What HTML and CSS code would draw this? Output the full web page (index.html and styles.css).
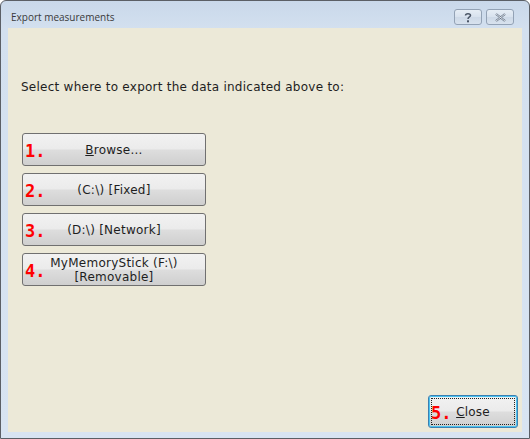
FILE: index.html
```html
<!DOCTYPE html>
<html>
<head>
<meta charset="utf-8">
<link rel="stylesheet" href="styles.css">
</head>
<body>
<div class="window">
  <div class="titlebar">
    <span class="title">Export measurements</span>
    <div class="caption-btns">
      <div class="cap-btn">
        <svg width="10" height="11" viewBox="0 0 10 11"><path d="M2.5 3.5 C2.5 1 7.5 1 7.5 3.5 C7.5 5 5 5 5 7" fill="none" stroke="#4a5566" stroke-width="1.5"/><rect x="4" y="8.3" width="2" height="2" fill="#4a5566"/></svg>
      </div>
      <div class="cap-btn">
        <svg width="13" height="9" viewBox="0 0 13 9"><path d="M2 1 L11 8 M11 1 L2 8" stroke="#6a7688" stroke-width="2.2" fill="none"/><path d="M2 1 L11 8 M11 1 L2 8" stroke="#eef2f7" stroke-width="0.8" fill="none"/></svg>
      </div>
    </div>
  </div>
  <div class="content">
    <p class="prompt">Select where to export the data indicated above to:</p>
    <div class="targets">
      <button class="btn"><span class="num">1.</span><span class="label"><u>B</u>rowse...</span></button>
      <button class="btn"><span class="num">2.</span><span class="label">(C:\) [Fixed]</span></button>
      <button class="btn"><span class="num">3.</span><span class="label">(D:\) [Network]</span></button>
      <button class="btn"><span class="num">4.</span><span class="label">MyMemoryStick (F:\)<br>[Removable]</span></button>
    </div>
    <div class="footer">
      <button class="btn close"><span class="num">5.</span><span class="label"><u>C</u>lose</span></button>
    </div>
  </div>
</div>
</body>
</html>
```

FILE: styles.css
```css
html, body {
  margin: 0;
  padding: 0;
  width: 530px;
  height: 439px;
  overflow: hidden;
  background: #ffffff;
}

.window {
  box-sizing: border-box;
  width: 530px;
  height: 439px;
  border: 1px solid #5b5f66;
  border-radius: 6px 6px 0 0;
  background: linear-gradient(#c9d8ea 0px, #d3e0ef 28px, #d8e4f2 100%);
  display: flex;
  flex-direction: column;
  padding: 0 7px 6px 7px;
}

.titlebar {
  height: 27px;
  flex: none;
  display: flex;
  align-items: flex-start;
  justify-content: space-between;
}

.title {
  font-family: "Open Sans", "Noto Sans", sans-serif;
  font-size: 10px;
  color: #3a3a3a;
  margin: 9px 0 0 3px;
  line-height: 14px;
}

.caption-btns {
  display: flex;
  gap: 4px;
  margin-top: 8px;
  margin-right: 8px;
}

.cap-btn {
  box-sizing: border-box;
  width: 28px;
  height: 16px;
  border: 1px solid #93a2b5;
  border-radius: 3px;
  background: linear-gradient(#e6edf5, #d8e2ee 50%, #cdd9e7 51%, #d8e2ee);
  display: flex;
  align-items: center;
  justify-content: center;
}

.content {
  flex: 1;
  background: #ece9d8;
  display: flex;
  flex-direction: column;
  padding: 0 4px 4px 14px;
}

.prompt {
  font-family: "DejaVu Sans", sans-serif;
  font-size: 12px;
  letter-spacing: 0.25px;
  color: #1e1e1e;
  margin: 52px 0 0 -1px;
  line-height: 14px;
}

.targets {
  display: flex;
  flex-direction: column;
  gap: 7px;
  margin-top: 39px;
}

.btn {
  position: relative;
  box-sizing: border-box;
  width: 184px;
  height: 33px;
  border: 1px solid #707070;
  border-radius: 3px;
  background: linear-gradient(#f2f2f2 0%, #ebebeb 48%, #dddddd 52%, #cfcfcf 100%);
  font-family: "DejaVu Sans", sans-serif;
  font-size: 12px;
  letter-spacing: 0.25px;
  color: #1e1e1e;
  line-height: 14px;
  padding: 0;
  display: flex;
  align-items: center;
  justify-content: center;
  text-align: center;
}

.num {
  position: absolute;
  left: 2px;
  top: 50%;
  transform: translateY(-50%);
  font-family: "DejaVu Sans Mono", monospace;
  font-weight: bold;
  font-size: 17px;
  letter-spacing: 0;
  color: #ff0000;
  line-height: 17px;
  margin-top: 1px;
}

.footer {
  margin-top: auto;
  display: flex;
  justify-content: flex-end;
}

.btn.close {
  width: 90px;
  border: 1px solid #3c7fb1;
  box-shadow: inset 0 0 0 1px #48c3f0;
}

.btn.close .label {
  font-size: 12px;
  letter-spacing: 0.2px;
}

.btn.close::after {
  content: "";
  position: absolute;
  left: 2px;
  top: 2px;
  right: 2px;
  bottom: 2px;
  border: 1px dotted #222;
}
```
